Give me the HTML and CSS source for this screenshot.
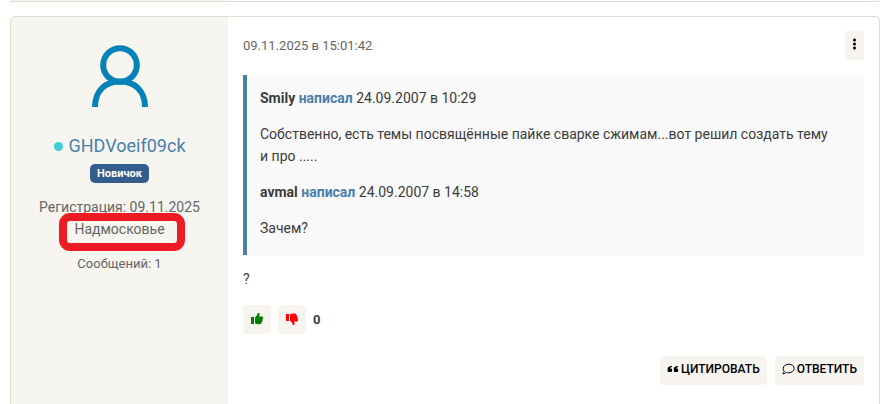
FILE: index.html
```
<!DOCTYPE html>
<html lang="ru">

<head>
    <meta charset="UTF-8">
    <meta name="viewport" content="width=device-width, initial-scale=1.0">
    <title>Форум</title>
    <link rel="stylesheet" href="styles.css">
</head>

<body>
    <div class="post post-prev">
        <div class="profile"></div>
    </div>

    <article class="post">
        <aside class="profile">
            <svg class="avatar" viewBox="0 0 58 64" fill="none" stroke="#0582b8" stroke-width="6">
                <circle cx="29" cy="20" r="16.8" />
                <path d="M4 62C4 46 14 36.500 29 36.500S54 46 54 62" />
            </svg>
            <div class="user">
                <span class="online"></span>
                <a href="#">GHDVoeif09ck</a>
            </div>
            <span class="rank">Новичок</span>
            <div class="registered">Регистрация: 09.11.2025</div>
            <div class="location">
                Надмосковье
                <svg class="marker" viewBox="0 0 126 38" fill="none" stroke="#ed1c24" stroke-width="8">
                    <rect x="4" y="4" width="118" height="30" rx="7" />
                </svg>
            </div>
            <div class="messages">Сообщений: 1</div>
        </aside>

        <div class="content">
            <header class="post-header">
                <time datetime="2025-11-09T15:01:42">09.11.2025 в 15:01:42</time>
                <button class="btn btn-menu" type="button" aria-label="Меню">
                    <svg width="5" height="12" viewBox="0 0 5 12">
                        <circle cx="2.500" cy="2" r="1.500" />
                        <circle cx="2.500" cy="6" r="1.500" />
                        <circle cx="2.500" cy="10" r="1.500" />
                    </svg>
                </button>
            </header>

            <blockquote class="quote">
                <p><b>Smily <a href="#">написал</a></b> 24.09.2007 в 10:29</p>
                <p>Собственно, есть темы посвящённые пайке сварке сжимам...вот решил создать тему и про .....</p>
                <p><b>avmal <a href="#">написал</a></b> 24.09.2007 в 14:58</p>
                <p>Зачем?</p>
            </blockquote>

            <p class="text">?</p>

            <div class="rating">
                <button class="btn btn-vote up" type="button" aria-label="Нравится">
                    <svg width="14" height="14" viewBox="0 0 14 14">
                        <path d="M1 5h3v7H1zM5 5.500L7.200 3 7.700 1Q9.800.5 9.700 2.500L9 4.500h3q1.300.2 1 1.500l-.4 1 .1 1.200-.6 1.100-.2 1-.8 1.200q-.5.7-1.600.7H8q-1.500-.1-3-1z" />
                    </svg>
                </button>
                <button class="btn btn-vote down" type="button" aria-label="Не нравится">
                    <svg width="14" height="14" viewBox="0 0 14 14">
                        <path d="M1 2h3v7H1zM5 8.500l2.200 2.500.5 2q2.100.5 2-1.500L9 9.500h3q1.300-.2 1-1.500l-.4-1 .1-1.200-.6-1.100-.2-1-.8-1.500q-.5-.7-1.600-.7H8q-1.500.1-3 1z" />
                    </svg>
                </button>
                <b>0</b>
            </div>

            <div class="actions">
                <button class="btn" type="button">
                    <svg width="12" height="12" viewBox="0 0 12 12">
                        <path d="M5 3v1Q3.200 4 3.100 5.600H4q1 0 1 1V8q0 1-1 1H1.700Q.6 9 .6 8V6.200Q.6 3 5 3z" />
                        <path d="M11.200 3v1Q9.400 4 9.300 5.600h.9q1 0 1 1V8q0 1-1 1H7.900Q6.800 9 6.800 8V6.200Q6.800 3 11.200 3z" />
                    </svg>
                    ЦИТИРОВАТЬ
                </button>
                <button class="btn" type="button">
                    <svg width="13" height="12" viewBox="0 0 13 12">
                        <path d="M6.700 1.200c3.100 0 5.500 1.900 5.500 4.300S9.800 9.800 6.700 9.800q-1.300 0-2.400-.4Q2.800 10.800.8 10.900q1.100-1.100 1.400-2.800-1-1.100-1-2.600c0-2.400 2.400-4.300 5.500-4.300z" fill="none" stroke="#000" />
                    </svg>
                    ОТВЕТИТЬ
                </button>
            </div>
        </div>
    </article>
</body>

</html>
```
FILE: styles.css
```
* {
    box-sizing: border-box;
}

body {
    margin: 0;
    padding: 0 4px 0 10px;
    height: 100vh;
    overflow: hidden;
    display: flex;
    flex-direction: column;
    gap: 14px;
    background: #fff;
    color: #3c3c3c;
    font-family: Roboto, "Liberation Sans", sans-serif;
    font-size: 14px;
    line-height: 22px;
}

a {
    color: #4a7ead;
    text-decoration: none;
}

p {
    margin: 0;
}

.post {
    flex: 1;
    display: flex;
    border: 1px solid #dedcd0;
    border-bottom: 0;
    border-radius: 5px 5px 0 0;
    overflow: hidden;
}

.post-prev {
    flex: none;
    height: 2px;
    border: 1px solid #dedcd0;
    border-top: 0;
    border-radius: 0 0 5px 5px;
}

/* left column */
.profile {
    width: 25%;
    background: #f6f5ef;
    color: #666;
    text-align: center;
}

.avatar {
    display: block;
    width: 58px;
    height: 64px;
    margin: 28px auto 26px;
}

.user {
    display: flex;
    justify-content: center;
    align-items: center;
    gap: 6px;
    font-size: 18px;
}

.online {
    width: 9px;
    height: 9px;
    border-radius: 50%;
    background: #40cfd3;
}

.rank {
    display: block;
    width: fit-content;
    margin: 7px auto 13px;
    padding: 0 7px;
    border-radius: 5px;
    background: #335d8c;
    color: #fff;
    font-size: 11px;
    font-weight: bold;
    line-height: 19px;
}

.location {
    position: relative;
}

/* sits over the location line and the edge of the line above */
.marker {
    position: absolute;
    left: calc(50% - 61px);
    top: -5px;
    width: 126px;
    height: 38px;
}

.messages {
    margin-top: 13px;
    font-size: 13px;
}

/* right column */
.content {
    flex: 1;
    padding: 14px 15px;
}

.post-header {
    display: flex;
    justify-content: space-between;
    align-items: center;
    margin-bottom: 15px;
    color: #666;
    font-size: 13px;
}

.btn {
    display: flex;
    align-items: center;
    gap: 2px;
    height: 29px;
    padding: 0 7px 3px;
    border: 0;
    border-radius: 4px;
    background: #f7f4f0;
    color: #000;
    font-family: inherit;
    font-size: 12px;
    font-weight: 500;
    cursor: pointer;
}

.quote {
    margin: 0 0 13px;
    padding: 12px 32px 16px 13px;
    border-left: 4px solid #4a7fa7;
    background: #f9f9f9;
}

.quote p + p {
    margin-top: 14px;
}

.rating {
    display: flex;
    align-items: center;
    gap: 7px;
    margin-top: 15px;
    font-size: 13px;
}

.btn-vote {
    padding: 0 7px 2px;
}

.up {
    fill: #008000;
}

.down {
    fill: #f00;
}

.actions {
    display: flex;
    justify-content: flex-end;
    gap: 8px;
    margin-top: 22px;
}
```
